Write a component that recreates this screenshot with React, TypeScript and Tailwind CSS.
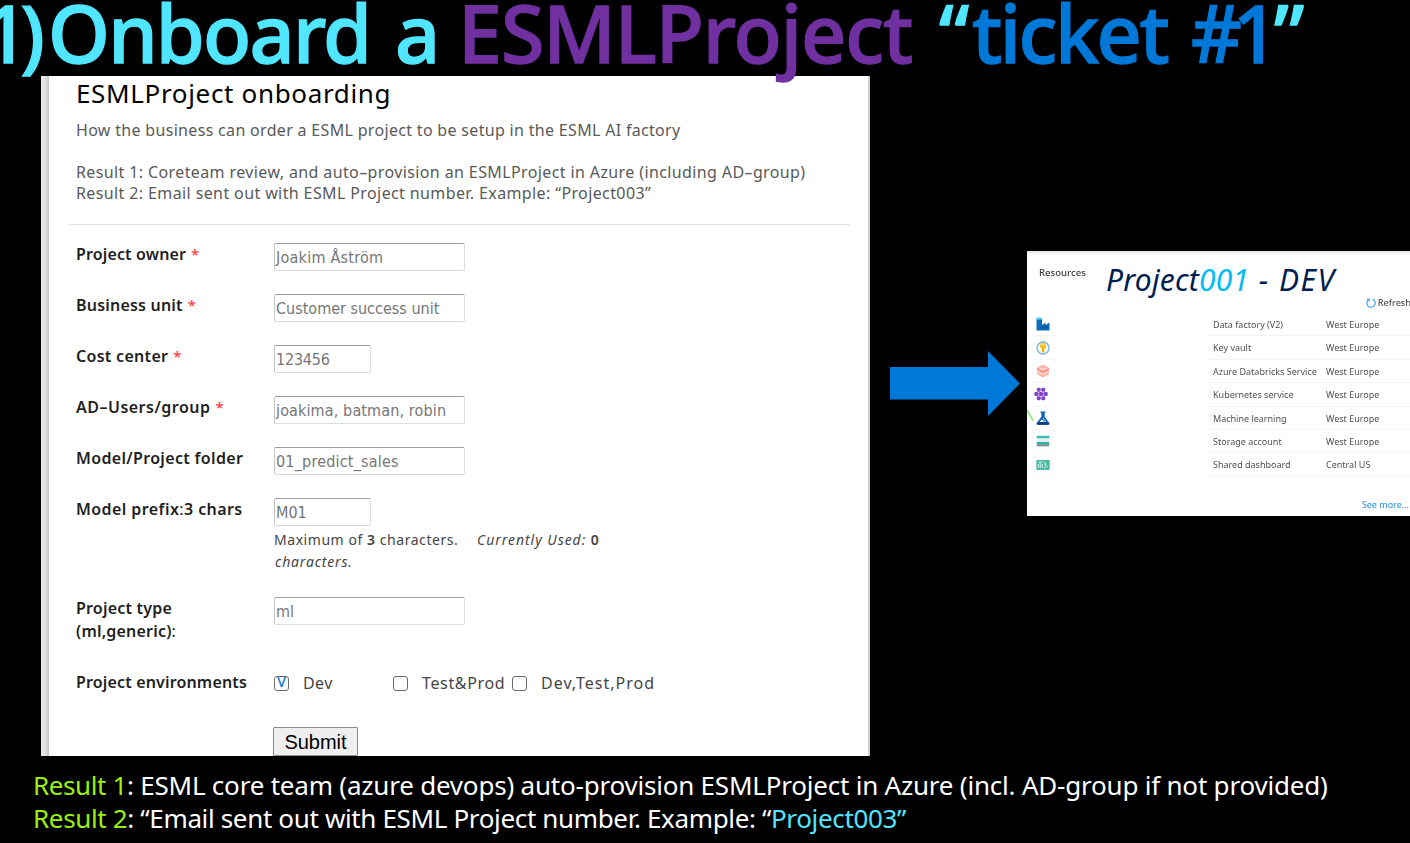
import React from 'react';

type FieldProps = {
  label: React.ReactNode;
  labelClass: string;
  required?: boolean;
  value: string;
  valueClass?: string;
  small?: boolean;
};

function TextBox({ value, valueClass = '', small }: { value: string; valueClass?: string; small?: boolean }) {
  return (
    <div
      className={`${small ? 'w-[97px]' : 'w-[191px]'} flex h-7 items-center rounded-[2px] border border-[#dcdcdc] border-t-[#9c9c9c] border-l-[#c4c4c4] bg-white pt-[2px] pl-px font-['DejaVu_Sans_Condensed','DejaVu_Sans',sans-serif] text-base leading-none whitespace-nowrap text-[#767676]`}
    >
      <span className={valueClass}>{value}</span>
    </div>
  );
}

function Field({ label, labelClass, required, value, valueClass, small }: FieldProps) {
  return (
    <div className="flex h-[51px] items-start">
      <div className={`w-[198px] text-base leading-[23px] font-semibold whitespace-nowrap text-[#1f1f1f] ${labelClass}`}>
        {label}
        {required && <span className="ml-[5px] text-[15px] font-normal text-[#ff2b2b]">*</span>}
      </div>
      <TextBox value={value} valueClass={valueClass} small={small} />
    </div>
  );
}

function CheckBox({ checked }: { checked?: boolean }) {
  return (
    <span className="flex size-[15px] items-center justify-center rounded-[3px] border-[1.5px] border-[#6b6b6b] bg-white text-[14px] leading-none text-[#0078d4]">
      {checked ? <span className="-mt-[3px] font-medium">V</span> : null}
    </span>
  );
}

const icon = 'block size-[14px]';

function FactoryIcon() {
  return (
    <svg className={icon} viewBox="0 0 14 14">
      <path d="M.5 1.500h5.500V8L9.500 5.500V8L13.500 5.500v8H.5z" fill="#0f6cbd" />
      <ellipse cx="3.300" cy="1.500" rx="2.800" ry="1.200" fill="#50d5f5" />
      <path d="M5.500 9.500h2v2h-2zM8.500 9.500h1.600v2H8.500zM11 9.500h1.500v2H11z" fill="#0a4a94" />
    </svg>
  );
}
function KeyIcon() {
  return (
    <svg className={icon} viewBox="0 0 14 14">
      <circle cx="7" cy="7" r="6" fill="#eef7ff" stroke="#79b4ee" strokeWidth="1.300" />
      <circle cx="7" cy="5" r="3" fill="#fcc515" />
      <path d="M6 6.500h2.300v4L7.200 12 6 10.800z" fill="#f2b200" />
      <circle cx="7" cy="3.800" r=".7" fill="#fff" />
    </svg>
  );
}
function DatabricksIcon() {
  return (
    <svg className={icon} viewBox="0 0 14 14">
      <path d="M7 .5 13 3.800v6.400L7 13.500 1 10.200V3.800z" fill="#ffb3aa" />
      <path d="M1 4 7 7.200 13 4v2L7 9.200 1 6z" fill="#ff9488" />
      <path d="M1.500 7.300 7 10.300l5.500-3" fill="none" stroke="#fff" strokeWidth=".8" />
      <path d="M3.500 3.800 7 5.600l3.500-1.800" fill="none" stroke="#fff" strokeWidth=".7" />
    </svg>
  );
}
function KubernetesIcon() {
  return (
    <svg className={`${icon} -ml-[2px]`} viewBox="0 0 14 14">
      <g fill="#8045cc">
        <rect x="2.800" y=".8" width="3.900" height="3.900" rx="1.200" />
        <rect x="7.300" y=".8" width="3.900" height="3.900" rx="1.200" />
        <rect x=".3" y="5" width="4.200" height="4" rx="1.200" />
        <rect x="4.900" y="5" width="4.200" height="4" rx="1.200" />
        <rect x="9.500" y="5" width="4.200" height="4" rx="1.200" />
        <rect x="2.800" y="9.300" width="3.900" height="3.900" rx="1.200" />
        <rect x="7.300" y="9.300" width="3.900" height="3.900" rx="1.200" />
      </g>
    </svg>
  );
}
function FlaskIcon() {
  return (
    <svg className={icon} viewBox="0 0 14 14">
      <path d="M4.500.5h5v1.300h-.8v4l4.600 6.200c.5.800 0 1.700-.9 1.700H1.600c-.9 0-1.400-.9-.9-1.700l4.600-6.200v-4h-.8z" fill="#1265b3" />
      <path d="M7 6.500 10.300 11H3.700L5.500 8.700 7 9.500z" fill="#fff" />
      <path d="M1 12.500 3.700 11H10.300l2.700 1.500-.6 1.200H1.600z" fill="#0b3c7a" />
      <path d="M7.200 8h1.600v3.200H7.200z" fill="#3f9be0" />
    </svg>
  );
}
function StorageIcon() {
  return (
    <svg className={icon} viewBox="0 0 14 14">
      <path d="M.7 1.800h12.600v2.700H.7z" fill="#37c2b1" />
      <path d="M.7 4.500h12.600v3.500H.7z" fill="#e9eeee" />
      <path d="M.7 8h12.600v2.200H.7z" fill="#35b5a4" />
      <path d="M.7 10.200h12.600v2.100H.7z" fill="#6f8f8c" />
    </svg>
  );
}
function DashboardIcon() {
  return (
    <svg className={icon} viewBox="0 0 14 14">
      <rect x=".3" y="2" width="13.400" height="10" rx=".8" fill="#4fb8a6" />
      <path d="M2.200 10V6M4.200 10V5M6.200 10V6" stroke="#d9f3ee" strokeWidth="1" />
      <path d="M2 4.200h5" stroke="#d9f3ee" strokeWidth=".8" />
      <path d="M9.200 4.200v3l2.500 1.600M8 9.800h1.500" stroke="#e9fffb" strokeWidth="1" fill="none" />
    </svg>
  );
}

const resources = [
  { Icon: FactoryIcon, type: 'Data factory (V2)', region: 'West Europe' },
  { Icon: KeyIcon, type: 'Key vault', region: 'West Europe' },
  { Icon: DatabricksIcon, type: 'Azure Databricks Service', region: 'West Europe' },
  { Icon: KubernetesIcon, type: 'Kubernetes service', region: 'West Europe' },
  { Icon: FlaskIcon, type: 'Machine learning', region: 'West Europe' },
  { Icon: StorageIcon, type: 'Storage account', region: 'West Europe' },
  { Icon: DashboardIcon, type: 'Shared dashboard', region: 'Central US' },
];

function Title() {
  return (
    <h1 className="relative z-10 flex h-[76px] text-[79px] leading-[66px] font-medium whitespace-nowrap text-[#50e6ff] [-webkit-text-stroke:1.3px_currentColor]">
      <span className="-ml-[17px] w-[65px] shrink-0 tracking-[-8px]">1)</span>
      <span className="w-[347px] shrink-0 tracking-[-1.8px]">Onboard</span>
      <span className="w-[63px] shrink-0">a</span>
      <span className="w-[481px] shrink-0 tracking-[-1.1px] text-[#7030a0]">ESMLProject</span>
      <span className="w-[33px] shrink-0 tracking-[-4px]">“</span>
      <span className="w-[219px] shrink-0 tracking-[-2.5px] text-[#0078d7]">ticket</span>
      <span className="w-[83px] shrink-0 tracking-[-9px] text-[#0078d7]">#1</span>
      <span className="shrink-0">”</span>
    </h1>
  );
}

function OrderForm() {
  return (
    <section className="flex h-[680px] w-[829px] shrink-0 border-r-2 border-[#cfcfcf] bg-white">
      <div className="w-2 shrink-0 bg-linear-to-r from-[#ebebeb] via-[#e2e2e2] to-[#c6c6c6]" />
      <div className="flex w-full flex-col pl-[19px] whitespace-nowrap">
        <header className="pl-2 text-base leading-[21px] text-[#595959]">
          <h2 className="h-[44px] text-[26px] leading-[35px] tracking-[0.66px] text-black">ESMLProject onboarding</h2>
          <p className="h-[42px] tracking-[0.317px]">How the business can order a ESML project to be setup in the ESML AI factory</p>
          <p className="tracking-[0.385px]">Result 1: Coreteam review, and auto–provision an ESMLProject in Azure (including AD–group)</p>
          <p className="tracking-[0.388px]">Result 2: Email sent out with ESML Project number. Example: “Project003”</p>
        </header>
        <hr className="mt-5 w-[782px] border-[#e3e3e3]" />
        <div className="flex flex-col pt-[18px] pl-2">
          <Field label="Project owner" labelClass="tracking-[0.14px]" required value="Joakim Åström" valueClass="tracking-[0.24px]" />
          <Field label="Business unit" labelClass="tracking-[0.2px]" required value="Customer success unit" />
          <Field label="Cost center" labelClass="tracking-[0.3px]" required value="123456" small valueClass="tracking-[-0.2px]" />
          <Field label="AD–Users/group" labelClass="tracking-[0.49px]" required value="joakima, batman, robin" valueClass="tracking-[0.13px]" />
          <Field label="Model/Project folder" labelClass="tracking-[0.33px]" value="01_predict_sales" valueClass="tracking-[0.19px]" />
          <div className="flex h-[99px]">
            <div className="w-[198px] text-base leading-[23px] font-semibold tracking-[0.42px] text-[#1f1f1f]">
              Model prefix<span className="font-normal">:</span>3 chars
            </div>
            <div>
              <TextBox value="M01" small />
              <div className="mt-[3px] flex text-[14px] leading-[22px] tracking-[0.55px] text-[#454545]">
                <span className="w-[203px]">
                  Maximum of <b className="font-semibold">3</b> characters.
                </span>
                <span className="tracking-[0.95px]">
                  <i>Currently Used:</i> <b className="font-semibold">0</b>
                </span>
              </div>
              <div className="pl-px text-[14px] leading-[22px] tracking-[0.8px] text-[#454545] italic">characters.</div>
            </div>
          </div>
          <div className="flex h-[74px]">
            <div className="w-[198px] text-base leading-[23px] font-semibold tracking-[0.2px] text-[#1f1f1f]">
              Project type
              <br />
              (ml,generic)<span className="font-normal">:</span>
            </div>
            <TextBox value="ml" />
          </div>
          <div className="flex h-[56px] text-base leading-[24px]">
            <div className="w-[198px] leading-[23px] font-semibold tracking-[0.16px] text-[#1f1f1f]">Project environments</div>
            <div className="flex h-6 items-center text-[#454545]">
              <CheckBox checked />
              <span className="w-[104px] pl-[14px] tracking-[0.4px]">Dev</span>
              <CheckBox />
              <span className="w-[104px] pl-[14px] tracking-[0.65px]">Test&amp;Prod</span>
              <CheckBox />
              <span className="pl-[14px] tracking-[1px]">Dev,Test,Prod</span>
            </div>
          </div>
          <button className="ml-[197px] h-[29px] w-[85px] rounded-[1px] border border-[#8b8b8b] bg-[#efefef] font-['Liberation_Sans',Arial,sans-serif] text-[20px] leading-none text-black">
            Submit
          </button>
        </div>
      </div>
    </section>
  );
}

function ResourcePanel() {
  return (
    <section className="relative h-[265px] w-[383px] shrink-0 overflow-hidden bg-white text-[9px] whitespace-nowrap text-[#505050]">
      <div className="h-1 bg-linear-to-b from-[#e4e4e4] to-white" />
      <div className="flex h-[37px] pl-3">
        <span className="w-[67px] pt-[11px] text-[9.600px] leading-[14px] font-medium text-[#3a3a3a] blur-[0.4px]">Resources</span>
        <h3 className="text-[30px] leading-[50px] tracking-[0.22px] text-[#002050] italic">
          Project<span className="text-[#00bcf2]">001</span>
          <span className="tracking-[1.55px]"> - DEV</span>
        </h3>
      </div>
      <div className="flex h-[21px] items-center justify-end gap-[2px] blur-[0.35px]">
        <svg className="size-[10px]" viewBox="0 0 10 10" fill="none" stroke="#3d9fe8" strokeWidth="1.200">
          <path d="M6.500 1.100A4.200 4.200 0 1 1 2.600 1.600" />
          <path d="M.9 1h2.300v2.300" />
        </svg>
        <span className="-mr-px text-[9.100px] leading-none font-medium">Refresh</span>
      </div>
      <div className="flex flex-col blur-[0.4px]">
        {resources.map(({ Icon, type, region }) => (
          <div key={type} className="flex h-[23.4px] items-center">
            <div className="ml-[5px] flex h-full w-[23px] items-center border-b border-[#f6f6f6] pl-1">
              <Icon />
            </div>
            <div className="ml-[153px] flex h-full flex-1 items-center border-b border-[#f4f4f4] pt-px pl-[5px]">
              <span className="w-[113px]">{type}</span>
              <span>{region}</span>
            </div>
          </div>
        ))}
      </div>
      <div className="flex justify-end pt-[21px] pr-[1px] text-[8.900px] leading-[14px] font-medium text-[#3a9be6] blur-[0.35px]">See more...</div>
      <svg className="absolute top-[158px] left-0 h-[14px] w-2" viewBox="0 0 8 14">
        <path d="M0 1 6 11.500" stroke="#7be36a" strokeWidth="1.500" />
      </svg>
    </section>
  );
}

export default function App() {
  return (
    <main className="h-[843px] w-[1410px] overflow-hidden bg-black font-['Noto_Sans','Open_Sans',sans-serif]">
      <Title />
      <div className="flex h-[680px] pl-[41px]">
        <OrderForm />
        <svg className="mt-[275px] ml-5 h-[65px] w-[130px] shrink-0" viewBox="0 0 130 65">
          <path d="M0 16h98V0l32 32.500L98 65V48.500H0z" fill="#0078d7" />
        </svg>
        <div className="ml-[7px] pt-[175px]">
          <ResourcePanel />
        </div>
      </div>
      <footer className="pt-[13px] pl-[33px] text-[26px] leading-[33px] whitespace-nowrap text-white">
        <p className="tracking-[-0.21px]">
          <span className="tracking-[-0.4px] text-[#9bf00b]">Result 1</span>: ESML core team (azure devops) auto-provision ESMLProject in Azure (incl. AD-group if not provided)
        </p>
        <p className="tracking-[-0.349px]">
          <span className="text-[#9bf00b]">Result 2</span>: “Email sent out with ESML Project number. Example: “<span className="text-[#50e6ff]">Project003”</span>
        </p>
      </footer>
    </main>
  );
}
